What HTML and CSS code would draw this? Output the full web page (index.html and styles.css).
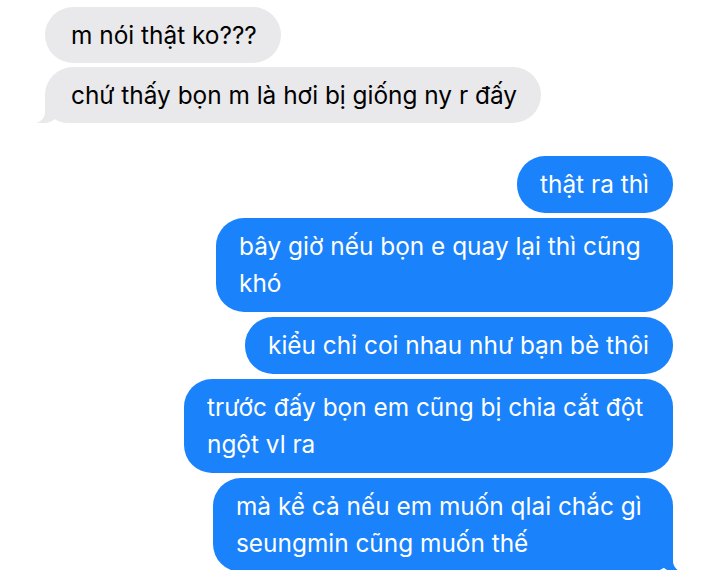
FILE: index.html
```html
<!DOCTYPE html>
<html lang="vi">
<head>
<meta charset="utf-8">
<link rel="stylesheet" href="styles.css">
</head>
<body>
<div class="chat">
  <div class="msg in">m nói thật ko???</div>
  <div class="msg in tail">chứ thấy bọn m là hơi bị giống ny r đấy</div>
  <div class="msg out first">thật ra thì</div>
  <div class="msg out w1">bây giờ nếu bọn e quay lại thì cũng khó</div>
  <div class="msg out">kiểu chỉ coi nhau như bạn bè thôi</div>
  <div class="msg out w2">trước đấy bọn em cũng bị chia cắt đột ngột vl ra</div>
  <div class="msg out tail w3">mà kể cả nếu em muốn qlai chắc gì seungmin cũng muốn thế</div>
</div>
</body>
</html>
```
FILE: styles.css
```css
html, body {
  margin: 0;
  padding: 0;
  background: #ffffff;
}
.chat {
  display: flex;
  flex-direction: column;
  padding-top: 7px;
  font-family: Inter, "Noto Sans", sans-serif;
  font-size: 24.4px;
  line-height: 37px;
}
.msg {
  position: relative;
  padding: 10px 24px 10px 26px;
  border-radius: 28px;
  max-width: 470px;
}
.msg.in {
  align-self: flex-start;
  margin-left: 45px;
  background: #e9e9eb;
  color: #000;
  margin-bottom: 4px;
  padding-bottom: 9px;
}
.msg.out {
  align-self: flex-end;
  margin-right: 47px;
  background: #1a82fb;
  color: #fff;
  margin-bottom: 5px;
  padding-left: 23px;
}
.msg.out.first {
  margin-top: 29px;
}
.msg.w1 { width: 410px; }
.msg.w2 { width: 442px; }
.msg.w3 { width: 413px; }
.msg.in.tail { border-bottom-left-radius: 22px; }
.msg.out.tail { border-bottom-right-radius: 22px; }
.msg.in.tail::before {
  content: "";
  position: absolute;
  bottom: 0;
  left: -8px;
  width: 24px;
  height: 26px;
  background: #e9e9eb;
  border-bottom-right-radius: 17px;
}
.msg.in.tail::after {
  content: "";
  position: absolute;
  bottom: 0;
  left: -12px;
  width: 12px;
  height: 26px;
  background: #fff;
  border-bottom-right-radius: 11px;
}
.msg.out.tail::before {
  content: "";
  position: absolute;
  bottom: 0;
  right: -9px;
  width: 24px;
  height: 28px;
  background: #1a82fb;
  border-bottom-left-radius: 17px;
}
.msg.out.tail::after {
  content: "";
  position: absolute;
  bottom: 0;
  right: -13px;
  width: 13px;
  height: 28px;
  background: #fff;
  border-bottom-left-radius: 11px;
}
```
